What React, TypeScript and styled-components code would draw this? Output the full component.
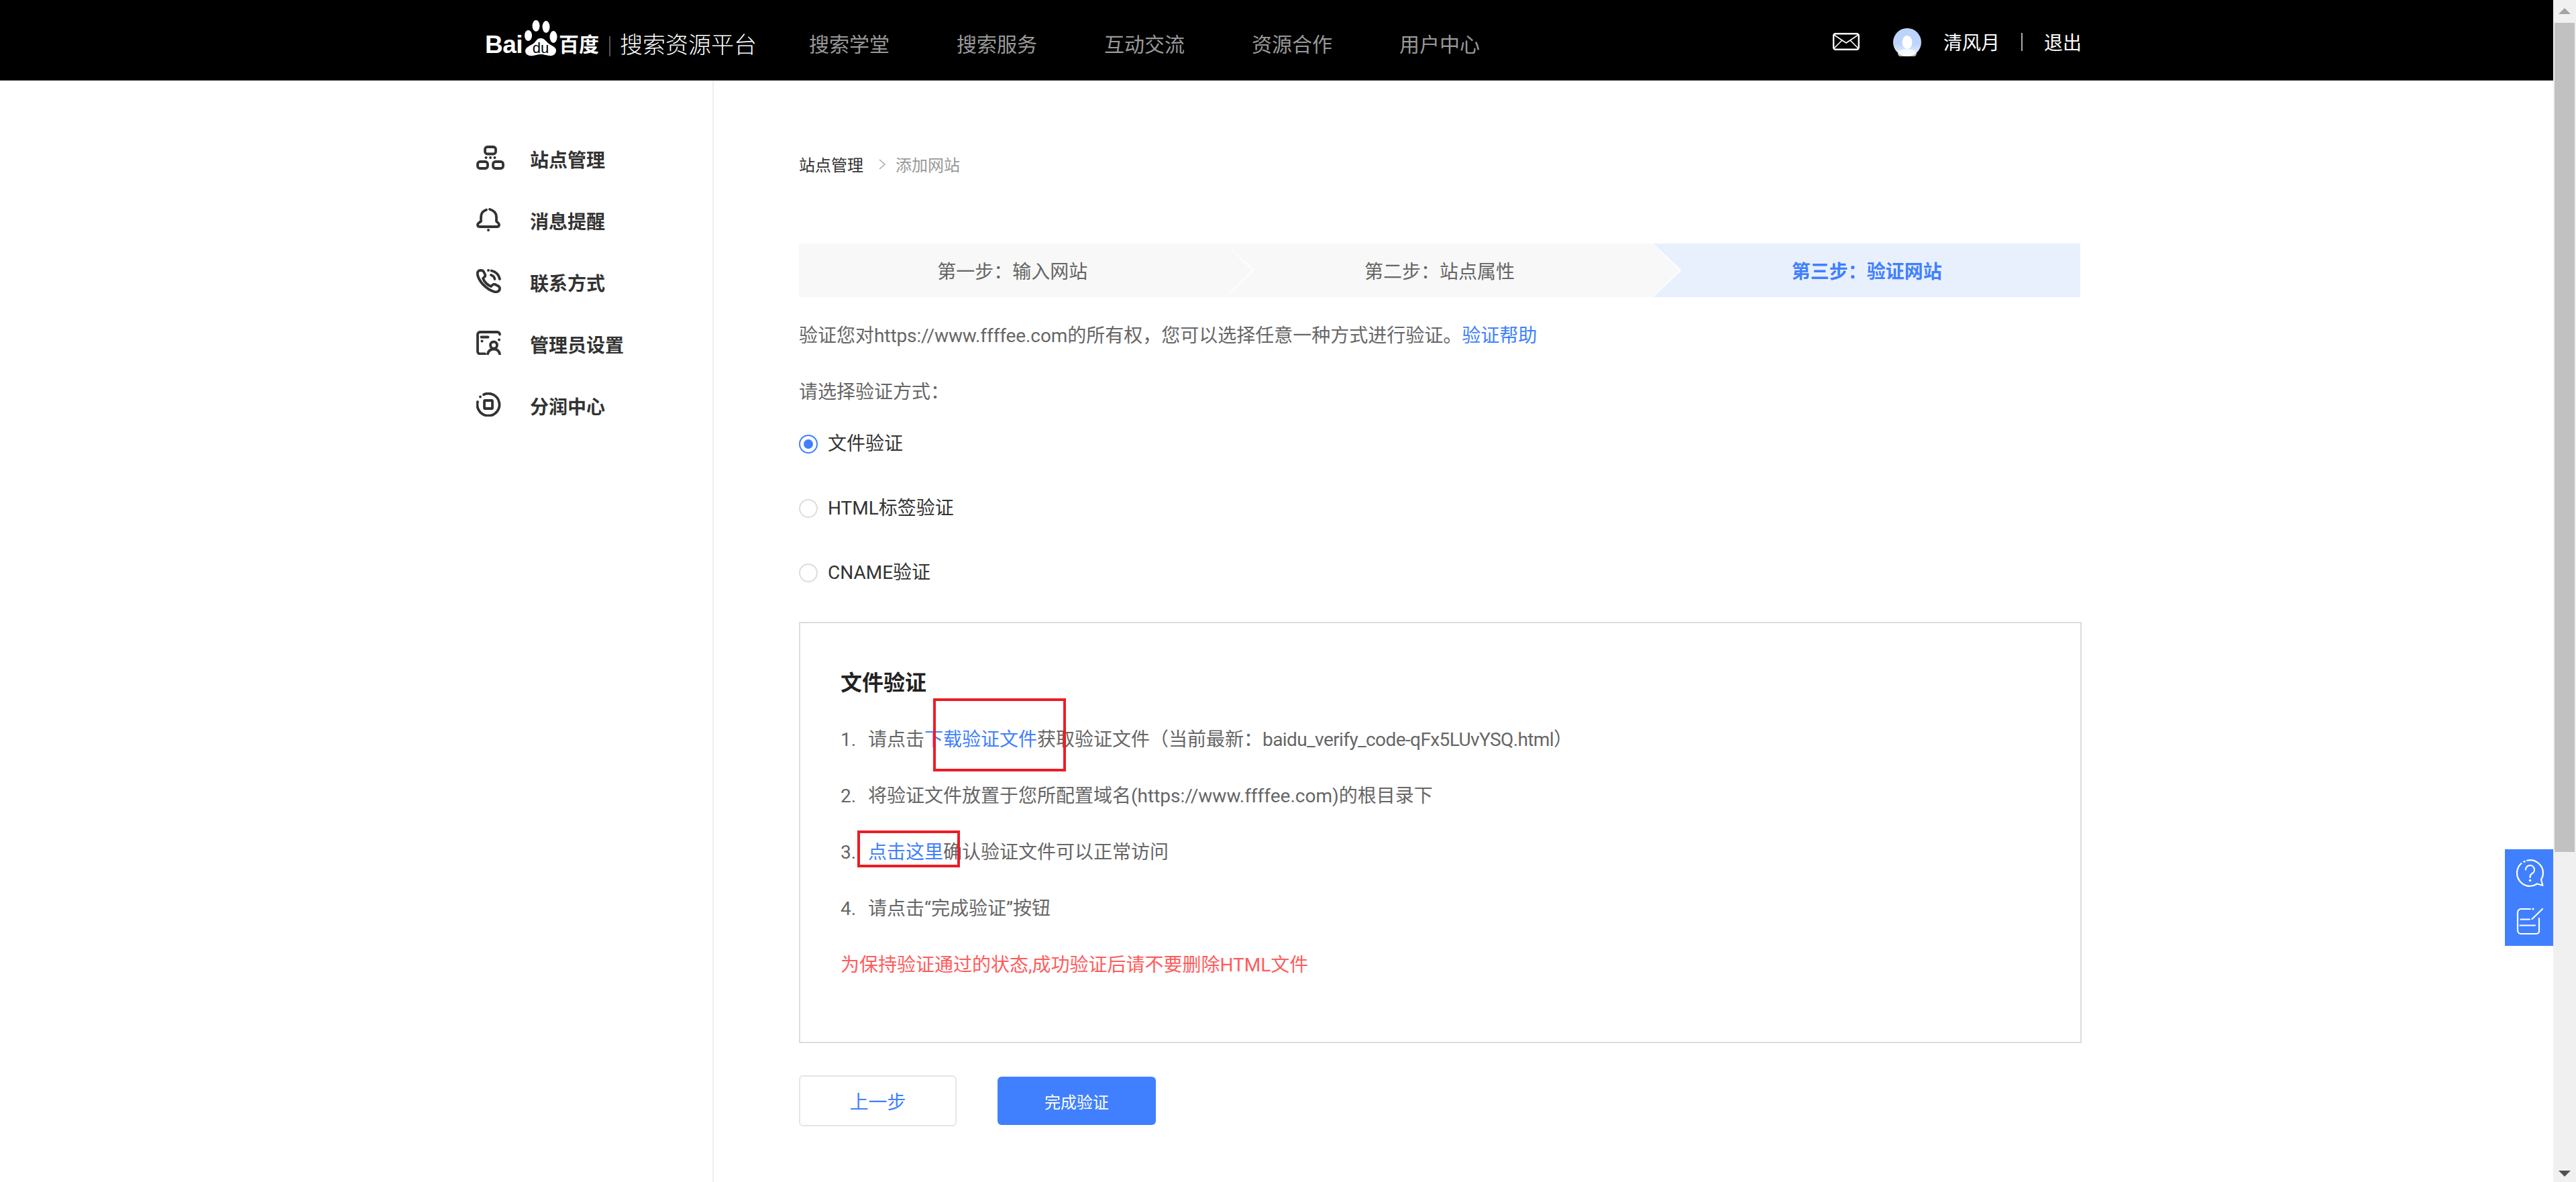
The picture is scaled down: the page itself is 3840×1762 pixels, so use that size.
import styled, { createGlobalStyle } from "styled-components";

const BLUE = "#4080ff";

// full-width punctuation
const COLON = "\uFF1A";
const COMMA = "\uFF0C";
const PAREN_L = "\uFF08";
const PAREN_R = "\uFF09";

const GlobalStyle = createGlobalStyle`
  html, body {
    margin: 0;
    padding: 0;
    height: 100%;
    overflow: hidden;
    background: #fff;
  }
  body {
    font-family: Roboto, "Noto Sans CJK SC", sans-serif;
    font-size: 28px;
    color: #666;
  }
  #root {
    height: 100%;
  }
`;

const Page = styled.div`
  display: flex;
  height: 1762px;
  position: relative;
`;

const Main = styled.div`
  flex: 1;
  min-width: 0;
  display: flex;
  flex-direction: column;
`;

const Header = styled.header`
  height: 120px;
  flex: none;
  background: #000;
  display: flex;
  align-items: center;
  padding: 0 703px 0 723px;
`;

const Logo = styled.div`
  display: flex;
  align-items: flex-end;
  height: 54px;
  margin-top: -7px;
  color: #fff;
`;

const LogoLatin = styled.span`
  font-family: "Liberation Sans", sans-serif;
  font-weight: 700;
  font-size: 37px;
  line-height: 34px;
  letter-spacing: -0.5px;
  width: 58px;
`;

const LogoCjk = styled.span`
  font-weight: 700;
  font-size: 30px;
  line-height: 34px;
`;

const BrandDivider = styled.i`
  width: 2px;
  height: 30px;
  margin: 0 14px 0 15px;
  background: #555;
`;

const BrandName = styled.span`
  font-size: 34px;
  font-weight: 300;
  line-height: 40px;
  color: #fff;
  margin-top: 13px;
`;

const Nav = styled.nav`
  display: flex;
  gap: 100px;
  margin-left: 78px;
  margin-top: 14px;
`;

const NavItem = styled.a`
  font-size: 30px;
  line-height: 40px;
  color: #999;
`;

const UserArea = styled.div`
  margin-left: auto;
  display: flex;
  align-items: center;
  margin-top: 4px;
  color: #fff;
`;

const Avatar = styled.svg`
  width: 42px;
  height: 42px;
  margin-left: 50px;
  margin-right: 33px;
  margin-top: 2px;
`;

const UserDivider = styled.i`
  width: 2px;
  height: 27px;
  margin: 0 32px;
  background: #aaa;
`;

const Body = styled.div`
  flex: 1;
  display: flex;
  min-height: 0;
`;

const Sidebar = styled.aside`
  width: 354px;
  box-sizing: content-box;
  padding: 71px 0 0 708px;
  flex: none;
  border-right: 2px solid #eee;
`;

const SideItem = styled.div`
  display: flex;
  align-items: center;
  height: 92px;
  padding-left: 2px;
  font-weight: 700;
  color: #333;
`;

const SideIcon = styled.svg`
  width: 42px;
  height: 36px;
  margin: 0 38px 4px 0;
  flex: none;
  fill: none;
  stroke: #333;
  stroke-width: 3.8;
  stroke-linecap: round;
  stroke-linejoin: round;

  .dot {
    fill: #333;
    stroke: none;
  }
`;

const Content = styled.main`
  padding: 104px 0 0 127px;
  width: 1910px;
`;

const Breadcrumb = styled.div`
  display: flex;
  align-items: center;
  height: 40px;
  font-size: 24px;
  color: #333;
`;

const CrumbArrow = styled.svg`
  width: 12px;
  height: 18px;
  margin: 2px 14px 0 22px;
  fill: none;
  stroke: #aaa;
  stroke-width: 1.6;
`;

const CrumbCurrent = styled.span`
  color: #999;
`;

const Steps = styled.div`
  display: flex;
  height: 80px;
  margin-top: 99px;
`;

const Step = styled.div<{ $active?: boolean; $last?: boolean }>`
  flex: 1;
  position: relative;
  display: flex;
  align-items: center;
  justify-content: center;
  background: ${(p) => (p.$active ? "#e9f0fd" : "#f8f8f8")};
  color: ${(p) => (p.$active ? BLUE : "#666")};
  font-weight: ${(p) => (p.$active ? 700 : 400)};

  ${(p) =>
    !p.$last &&
    `
    &::before,
    &::after {
      content: "";
      position: absolute;
      top: 0;
      bottom: 0;
      clip-path: polygon(0 0, 100% 50%, 0 100%);
    }
    &::before {
      left: 100%;
      width: 42px;
      background: #fff;
      z-index: 1;
    }
    &::after {
      left: calc(100% - 1px);
      width: 40px;
      background: #f8f8f8;
      z-index: 2;
    }
  `}
`;

const TextLine = styled.p<{ $top: number }>`
  margin: ${(p) => p.$top}px 0 0;
  line-height: 40px;
  height: 40px;
  white-space: nowrap;
`;

const SiteUrl = styled.span`
  letter-spacing: -0.1px;
`;

const CodeName = styled.span`
  letter-spacing: -0.6px;
`;

const Link = styled.a`
  color: ${BLUE};
`;

const RadioGroup = styled.div`
  display: flex;
  flex-direction: column;
  gap: 56px;
  margin-top: 37px;
`;

const RadioRow = styled.label`
  display: flex;
  align-items: center;
  gap: 15px;
  height: 40px;
  color: #333;
`;

const RadioText = styled.span`
  margin-top: -6px;
`;

const RadioMark = styled.span<{ $on?: boolean }>`
  box-sizing: border-box;
  width: 28px;
  height: 28px;
  border-radius: 50%;
  border: 2px solid ${(p) => (p.$on ? BLUE : "#ddd")};
  background: #fff;
  display: flex;
  align-items: center;
  justify-content: center;

  &::after {
    content: "";
    display: ${(p) => (p.$on ? "block" : "none")};
    width: 14px;
    height: 14px;
    border-radius: 50%;
    background: ${BLUE};
  }
`;

const GuideBox = styled.section`
  position: relative;
  box-sizing: border-box;
  height: 628px;
  margin: 53px -2px 0 0;
  padding: 67px 0 0 60px;
  border: 2px solid #ddd;
`;

const GuideTitle = styled.h3`
  margin: 0 0 43px;
  font-size: 32px;
  line-height: 44px;
  font-weight: 700;
  color: #222;
`;

const GuideList = styled.ol`
  list-style: none;
  margin: 0;
  padding: 0;
  display: flex;
  flex-direction: column;
  gap: 44px;
`;

const GuideItem = styled.li`
  display: flex;
  line-height: 40px;
  height: 40px;
  white-space: nowrap;
`;

const GuideNo = styled.span`
  width: 41px;
  flex: none;
`;

const Warning = styled.li`
  line-height: 40px;
  height: 40px;
  color: #ff5c5c;
`;

const Annotation = styled.div<{ $x: number; $y: number; $w: number; $h: number }>`
  position: absolute;
  box-sizing: border-box;
  left: ${(p) => p.$x}px;
  top: ${(p) => p.$y}px;
  width: ${(p) => p.$w}px;
  height: ${(p) => p.$h}px;
  border: 4px solid #ed1c24;
`;

const Actions = styled.div`
  display: flex;
  align-items: center;
  gap: 61px;
  margin-top: 48px;
`;

const GhostButton = styled.button`
  box-sizing: border-box;
  width: 235px;
  height: 76px;
  border: 2px solid #e5e5e5;
  border-radius: 6px;
  background: #fff;
  color: ${BLUE};
  font: inherit;
  padding: 0;
`;

const PrimaryButton = styled.button`
  width: 236px;
  height: 72px;
  border: 0;
  border-radius: 6px;
  background: ${BLUE};
  color: #fff;
  font: inherit;
  font-size: 24px;
  padding: 0;
`;

const FloatTools = styled.div`
  position: absolute;
  right: 34px;
  top: 1266px;
  width: 72px;
  height: 144px;
  background: ${BLUE};
  display: flex;
  flex-direction: column;
`;

const FloatTool = styled.div`
  height: 72px;
  display: flex;
  align-items: center;
  justify-content: center;
  padding-left: 4px;
`;

const FloatIcon = styled.svg`
  width: 42px;
  height: 42px;
  fill: none;
  stroke: #fff;
  stroke-width: 2.2;
  stroke-linecap: round;
  stroke-linejoin: round;

  .dot {
    fill: #fff;
    stroke: none;
  }
`;

const Scrollbar = styled.div`
  width: 34px;
  flex: none;
  background: #f0f0f0;
  display: flex;
  flex-direction: column;
  align-items: center;
`;

const ScrollArrow = styled.div<{ $down?: boolean }>`
  height: 34px;
  width: 34px;
  flex: none;
  display: flex;
  align-items: center;
  justify-content: center;

  &::after {
    content: "";
    border-left: 9px solid transparent;
    border-right: 9px solid transparent;
    ${(p) =>
      p.$down
        ? "border-top: 9px solid #505050; margin-top: 8px;"
        : "border-bottom: 9px solid #a3a3a3; margin-top: -2px;"}
  }
`;

const ScrollThumb = styled.div`
  width: 30px;
  height: 1236px;
  flex: none;
  background: #c1c1c1;
  margin-bottom: auto;
`;

const sideItems = [
  {
    label: "站点管理",
    icon: (
      <>
        <rect x="13" y="2" width="16" height="10.5" rx="3.5" />
        <rect x="2" y="24" width="15" height="10" rx="3.5" />
        <rect x="25" y="24" width="15" height="10" rx="3.5" />
        <circle className="dot" cx="14.5" cy="18" r="2" />
        <circle className="dot" cx="21" cy="18" r="2" />
        <circle className="dot" cx="27.5" cy="18" r="2" />
      </>
    ),
  },
  {
    label: "消息提醒",
    icon: (
      <>
        <path d="M15 3.8C10 5 7 9.5 7 14.5V21Q2 24 2 26Q2 29 5 29H31Q34 29 34 26Q34 24 30 21V14.5C30 9.5 27 5 20 3" />
        <circle className="dot" cx="18" cy="34" r="2" />
      </>
    ),
  },
  {
    label: "联系方式",
    icon: (
      <>
        <path d="M6 2C3 2 1 5 2 9C4 18 14 30 27 34C31 35 35 33 35 29C35 27 34 26 32 25L28 23C26 22 25 23 24 24L22 26C17 24 12 19 10 14L12 12C13 11 14 10 13 8L11 4C10 2 8 2 6 2Z" />
        <path d="M22 9C25 10 27 12 27.5 15" />
        <path d="M22.5 2.5C29 4 33.5 8.5 35 15" />
        <circle className="dot" cx="18" cy="2" r="2" />
      </>
    ),
  },
  {
    label: "管理员设置",
    icon: (
      <>
        <path d="M13 34.5H5.5A3.5 3.5 0 0 1 2 31V5.5A3.5 3.5 0 0 1 5.5 2H31.5A3.5 3.5 0 0 1 35 5.5" />
        <path d="M7.5 9.5H17.5" />
        <circle className="dot" cx="8.5" cy="15.5" r="2" />
        <circle className="dot" cx="34" cy="13.5" r="2" />
        <circle cx="26" cy="21.5" r="5" />
        <path d="M17 35C18 30 21 27.5 26 27.5C31 27.5 34 30 35 35" />
      </>
    ),
  },
  {
    label: "分润中心",
    icon: (
      <>
        <path d="M11 3.2A16.5 16.5 0 1 1 2 14" />
        <rect x="12" y="12" width="12" height="12" rx="1" />
        <circle className="dot" cx="6" cy="6.5" r="2" />
      </>
    ),
  },
];

const App = () => {
  return (
    <Page lang="zh-CN">
      <GlobalStyle />
      <Main>
        <Header>
          <Logo>
            <LogoLatin>Bai</LogoLatin>
            <svg width="52" height="54" viewBox="0 0 52 54">
              <g fill="#fff">
                <ellipse cx="6.5" cy="23" rx="5.5" ry="8" />
                <ellipse cx="18" cy="8.5" rx="5.5" ry="8.5" />
                <ellipse cx="33" cy="10" rx="5.5" ry="9" />
                <ellipse cx="44" cy="25" rx="5.5" ry="9" />
                <path d="M25 27C19 27 18 32 14 35C9 38 2 41 2 46C2 51 7 54 13 53C19 52 21 51 25 51C29 51 32 52 38 53C44 54 48 50 48 45C48 40 41 38 37 35C33 32 31 27 25 27Z" />
              </g>
              <text
                x="25"
                y="49"
                textAnchor="middle"
                fontFamily="'Liberation Sans', sans-serif"
                fontSize="22"
                fill="#000"
              >
                du
              </text>
            </svg>
            <LogoCjk>百度</LogoCjk>
            <BrandDivider />
          </Logo>
          <BrandName>搜索资源平台</BrandName>
          <Nav>
            <NavItem>搜索学堂</NavItem>
            <NavItem>搜索服务</NavItem>
            <NavItem>互动交流</NavItem>
            <NavItem>资源合作</NavItem>
            <NavItem>用户中心</NavItem>
          </Nav>
          <UserArea>
            <svg width="40" height="26" viewBox="0 0 40 26" fill="none" stroke="#fff" strokeWidth="2.4">
              <rect x="1.2" y="1.2" width="37.6" height="23.6" rx="3" />
              <path d="M2 3L20 15L38 3M2 23L14 11M38 23L26 11" strokeWidth="1.6" />
            </svg>
            <Avatar viewBox="0 0 42 42">
              <defs>
                <linearGradient id="avatarFade" x1="0" y1="0" x2="0" y2="1">
                  <stop offset="0.55" stopColor="#bcd4fb" />
                  <stop offset="1" stopColor="#eef4ff" />
                </linearGradient>
              </defs>
              <circle cx="21" cy="21" r="21" fill="url(#avatarFade)" />
              <ellipse cx="21" cy="21" rx="7.5" ry="10" fill="#fff" />
              <ellipse cx="21" cy="38" rx="14" ry="7" fill="#fff" opacity="0.75" />
            </Avatar>
            <span>清风月</span>
            <UserDivider />
            <span>退出</span>
          </UserArea>
        </Header>
        <Body>
          <Sidebar>
            {sideItems.map((item) => (
              <SideItem key={item.label}>
                <SideIcon viewBox="0 0 42 36">{item.icon}</SideIcon>
                {item.label}
              </SideItem>
            ))}
          </Sidebar>
          <Content>
            <Breadcrumb>
              <span>站点管理</span>
              <CrumbArrow viewBox="0 0 12 18">
                <path d="M2 2L10 9L2 16" />
              </CrumbArrow>
              <CrumbCurrent>添加网站</CrumbCurrent>
            </Breadcrumb>
            <Steps>
              <Step>第一步{COLON}输入网站</Step>
              <Step>第二步{COLON}站点属性</Step>
              <Step $active $last>
                第三步{COLON}验证网站
              </Step>
            </Steps>
            <TextLine $top={38}>
              验证您对<SiteUrl>https://www.ffffee.com</SiteUrl>的所有权{COMMA}您可以选择任意一种方式进行验证。
              <Link>验证帮助</Link>
            </TextLine>
            <TextLine $top={44}>请选择验证方式{COLON}</TextLine>
            <RadioGroup>
              <RadioRow>
                <RadioMark $on />
                <RadioText>文件验证</RadioText>
              </RadioRow>
              <RadioRow>
                <RadioMark />
                <RadioText>HTML标签验证</RadioText>
              </RadioRow>
              <RadioRow>
                <RadioMark />
                <RadioText>CNAME验证</RadioText>
              </RadioRow>
            </RadioGroup>
            <GuideBox>
              <GuideTitle>文件验证</GuideTitle>
              <GuideList>
                <GuideItem>
                  <GuideNo>1.</GuideNo>
                  <span>
                    请点击<Link>下载验证文件</Link>获取验证文件{PAREN_L}当前最新{COLON}
                    <CodeName>baidu_verify_code-qFx5LUvYSQ.html</CodeName>
                    {PAREN_R}
                  </span>
                </GuideItem>
                <GuideItem>
                  <GuideNo>2.</GuideNo>
                  <span>将验证文件放置于您所配置域名(https://www.ffffee.com)的根目录下</span>
                </GuideItem>
                <GuideItem>
                  <GuideNo>3.</GuideNo>
                  <span>
                    <Link>点击这里</Link>确认验证文件可以正常访问
                  </span>
                </GuideItem>
                <GuideItem>
                  <GuideNo>4.</GuideNo>
                  <span>请点击“完成验证”按钮</span>
                </GuideItem>
                <Warning>为保持验证通过的状态,成功验证后请不要删除HTML文件</Warning>
              </GuideList>
              <Annotation $x={198} $y={112} $w={198} $h={109} />
              <Annotation $x={85} $y={309} $w={153} $h={55} />
            </GuideBox>
            <Actions>
              <GhostButton>上一步</GhostButton>
              <PrimaryButton>完成验证</PrimaryButton>
            </Actions>
          </Content>
        </Body>
      </Main>
      <FloatTools>
        <FloatTool>
          <FloatIcon viewBox="0 0 42 42">
            <path d="M16 1.7A19.5 19.5 0 0 1 40 20.5C40 25 38.5 28 37 30.5L39.5 39L31 36.5C28 38.5 24.5 40 20.5 40A19.5 19.5 0 0 1 7.5 6" />
            <circle className="dot" cx="12" cy="3.3" r="1.6" />
            <path d="M14 15.5A6.5 6.5 0 1 1 23 21.5C21.5 22.5 20.5 23.5 20.5 27" />
            <circle className="dot" cx="20.5" cy="31.5" r="1.8" />
          </FloatIcon>
        </FloatTool>
        <FloatTool>
          <FloatIcon viewBox="0 0 42 42">
            <path d="M21 2H7A5 5 0 0 0 2 7V34A5 5 0 0 0 7 39H30A4 4 0 0 0 34 35V16" />
            <circle className="dot" cx="25" cy="2" r="1.6" />
            <path d="M23.5 17L39 2" />
            <path d="M6.5 17.5H20" />
            <path d="M5.5 26.5H28" />
          </FloatIcon>
        </FloatTool>
      </FloatTools>
      <Scrollbar>
        <ScrollArrow />
        <ScrollThumb />
        <ScrollArrow $down />
      </Scrollbar>
    </Page>
  );
};

export default App;
